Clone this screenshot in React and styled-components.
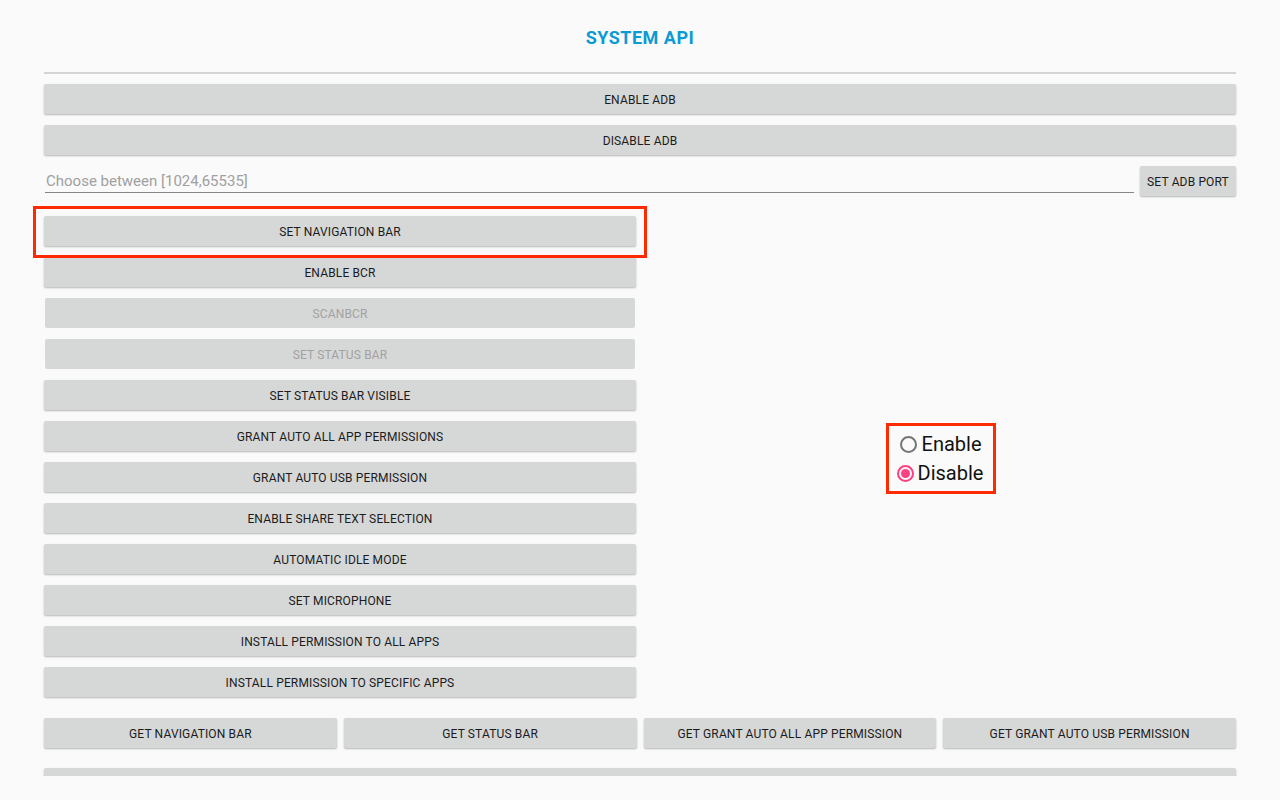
import React, { useState } from "react";
import styled, { createGlobalStyle, css } from "styled-components";

const GlobalStyle = createGlobalStyle`
  html, body {
    margin: 0;
    padding: 0;
    background: #fafafa;
    overflow: hidden;
  }
  * { box-sizing: border-box; }
`;

const Screen = styled.div`
  width: 1280px;
  height: 800px;
  background: #fafafa;
  font-family: Roboto, "Noto Sans", "Liberation Sans", sans-serif;
`;

const Scroller = styled.div`
  height: 776px;
  overflow: hidden;
  padding: 0 44px;
`;

const Header = styled.div`
  height: 74px;
  display: flex;
  align-items: center;
  justify-content: center;
  padding-top: 2px;
  border-bottom: 2px solid #d4d4d4;
`;

const Title = styled.h1`
  margin: 0;
  font-size: 18px;
  font-weight: 700;
  color: #0b9ad3;
  letter-spacing: 0.5px;
`;

const Stack = styled.div`
  display: flex;
  flex-direction: column;
  gap: 11px;
  padding-top: 10px;
`;

const Button = styled.button`
  height: 30px;
  width: 100%;
  border: none;
  border-radius: 2px;
  background: #d6d7d7;
  box-shadow: 0 1px 2px rgba(0, 0, 0, 0.28);
  font-family: inherit;
  font-size: 12px;
  font-weight: 400;
  color: #1c1c1c;
  text-transform: uppercase;
  letter-spacing: 0.15px;
  padding: 2px 6px 0;
  cursor: pointer;
  white-space: nowrap;

  ${(p) =>
    p.disabled &&
    css`
      width: calc(100% - 2px);
      margin: 0 1px;
      box-shadow: none;
      color: #a2a2a2;
      cursor: default;
    `}
`;

const PortRow = styled.div`
  display: flex;
  align-items: center;
  gap: 6px;
`;

const PortInput = styled.input`
  flex: 1;
  height: 27px;
  margin: 0 0 0 1px;
  padding: 4px 0 0 1px;
  align-self: flex-start;
  border: none;
  border-bottom: 1px solid #858585;
  background: transparent;
  font-family: inherit;
  font-size: 15px;
  color: #222;
  outline: none;

  &::placeholder {
    color: #a0a0a0;
  }
`;

const PortButton = styled(Button)`
  width: 96px;
  flex: none;
`;

const Main = styled.div`
  display: flex;
  padding-top: 20px;
`;

const LeftColumn = styled.div`
  width: 592px;
  display: flex;
  flex-direction: column;
  gap: 11px;
`;

const Highlight = styled.div`
  position: relative;

  &::after {
    content: "";
    position: absolute;
    top: -10px;
    bottom: -12px;
    left: -11px;
    right: -11px;
    border: 3px solid #ff2a00;
    pointer-events: none;
  }
`;

const RightColumn = styled.div`
  flex: 1;
  display: flex;
  align-items: center;
  justify-content: center;
  padding: 0 0 0 8px;
`;

const RadioGroup = styled(Highlight)`
  display: flex;
  flex-direction: column;
  gap: 1px;
  padding: 0;
  margin-top: 4px;

  &::after {
    top: -7px;
    bottom: -7px;
    left: -11px;
    right: -13px;
  }
`;

const RadioLabel = styled.label`
  display: flex;
  align-items: center;
  gap: 5px;
  height: 28px;
  font-size: 20px;
  color: #111;
  cursor: pointer;
`;

const RadioDot = styled.span`
  width: 17px;
  height: 17px;
  border-radius: 50%;
  border: 2px solid ${(p) => (p.$checked ? "#ff4081" : "#757575")};
  display: flex;
  align-items: center;
  justify-content: center;
  margin-left: ${(p) => (p.$checked ? "0" : "3px")};
  margin-right: ${(p) => (p.$checked ? "-1px" : "0")};

  &::after {
    content: "";
    width: 9px;
    height: 9px;
    border-radius: 50%;
    background: ${(p) => (p.$checked ? "#ff4081" : "transparent")};
  }
`;

const HiddenRadio = styled.input`
  display: none;
`;

const BottomRow = styled.div`
  display: grid;
  grid-template-columns: repeat(4, 1fr);
  gap: 7px;
  padding-top: 21px;
`;

const CutOffRow = styled.div`
  padding-top: 20px;
`;

const leftButtons = [
  { label: "Enable BCR" },
  { label: "ScanBCR", disabled: true },
  { label: "Set Status Bar", disabled: true },
  { label: "Set Status Bar Visible" },
  { label: "Grant Auto All App Permissions" },
  { label: "Grant Auto USB Permission" },
  { label: "Enable Share Text Selection" },
  { label: "Automatic Idle Mode" },
  { label: "Set Microphone" },
  { label: "Install Permission To All Apps" },
  { label: "Install Permission To Specific Apps" },
];

const getButtons = [
  "Get Navigation Bar",
  "Get Status Bar",
  "Get Grant Auto All App Permission",
  "Get Grant Auto USB Permission",
];

export default function App() {
  const [navState, setNavState] = useState("disable");
  const [port, setPort] = useState("");

  return (
    <Screen>
      <GlobalStyle />
      <Scroller>
        <Header>
          <Title>SYSTEM API</Title>
        </Header>

        <Stack>
          <Button>Enable ADB</Button>
          <Button>Disable ADB</Button>
          <PortRow>
            <PortInput
              placeholder="Choose between [1024,65535]"
              value={port}
              onChange={(e) => setPort(e.target.value)}
            />
            <PortButton>Set ADB Port</PortButton>
          </PortRow>
        </Stack>

        <Main>
          <LeftColumn>
            <Highlight>
              <Button>Set Navigation Bar</Button>
            </Highlight>
            {leftButtons.map((b) => (
              <Button key={b.label} disabled={b.disabled}>
                {b.label}
              </Button>
            ))}
          </LeftColumn>

          <RightColumn>
            <RadioGroup>
              {["enable", "disable"].map((v) => (
                <RadioLabel key={v}>
                  <HiddenRadio
                    type="radio"
                    name="nav"
                    checked={navState === v}
                    onChange={() => setNavState(v)}
                  />
                  <RadioDot $checked={navState === v} />
                  {v === "enable" ? "Enable" : "Disable"}
                </RadioLabel>
              ))}
            </RadioGroup>
          </RightColumn>
        </Main>

        <BottomRow>
          {getButtons.map((label) => (
            <Button key={label}>{label}</Button>
          ))}
        </BottomRow>

        {/* next button, scrolled below the visible area */}
        <CutOffRow>
          <Button aria-label="more" />
        </CutOffRow>
      </Scroller>
    </Screen>
  );
}
